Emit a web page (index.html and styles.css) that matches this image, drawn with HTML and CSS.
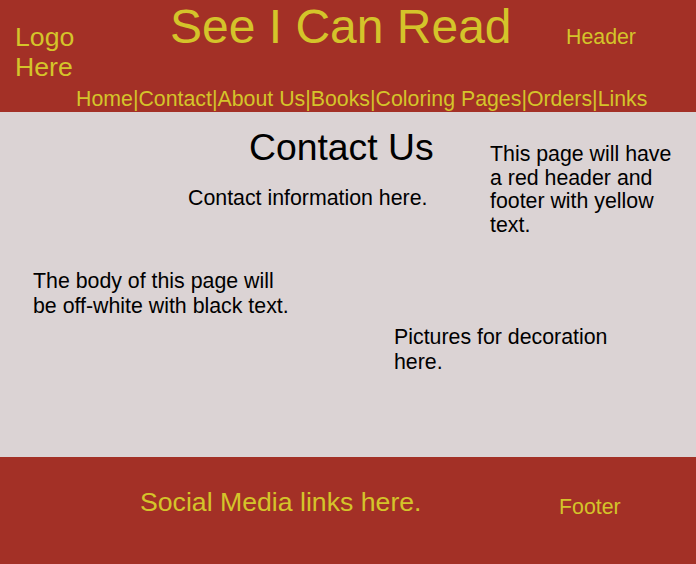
FILE: index.html
```html
<!DOCTYPE html>
<html lang="en">
<head>
<meta charset="UTF-8">
<meta name="viewport" content="width=device-width, initial-scale=1.0">
<title>See I Can Read - Contact Us</title>
<link rel="stylesheet" href="styles.css">
</head>
<body>
    <header id="site-header">
        <div class="logo">Logo<br>Here</div>
        <div class="site-title">See I Can Read</div>
        <div class="region-label">Header</div>
        <nav class="main-nav">Home|Contact|About Us|Books|Coloring Pages|Orders|Links</nav>
    </header>
    <main id="content">
        <div class="intro">
            <div class="contact">
                <h1>Contact Us</h1>
                <p class="contact-info">Contact information here.</p>
            </div>
            <p class="note">This page will have a red header and footer with yellow text.</p>
        </div>
        <p class="body-note">The body of this page will be off-white with black text.</p>
        <p class="pictures">Pictures for decoration here.</p>
    </main>
    <footer id="site-footer">
        <p class="social">Social Media links here.</p>
        <p class="region-label">Footer</p>
    </footer>
</body>
</html>
```

FILE: styles.css
```css
body {
    font-family: "Liberation Sans", Arial, sans-serif;
    font-size: 21.33px;
    margin: 0;
    padding: 0;
    background-color: #dbd3d4;
    color: #000;
}
p {
    margin: 0;
}
#site-header {
    display: grid;
    grid-template-columns: 155px 396px 1fr;
    align-items: start;
    height: 112px;
    box-sizing: border-box;
    padding-left: 15px;
    background-color: #a33026;
    color: #d4c42a;
}
.logo {
    font-size: 26.67px;
    line-height: 30px;
    margin-top: 22px;
}
.site-title {
    font-size: 48px;
    line-height: 48px;
    margin-top: 3px;
}
#site-header .region-label {
    margin-top: 25px;
}
.main-nav {
    grid-column: 1 / -1;
    margin-top: 5px;
    padding-left: 61px;
}
#content {
    height: 345px;
    box-sizing: border-box;
    overflow: hidden;
}
.intro {
    display: grid;
    grid-template-columns: 1fr 206px;
}
.contact h1 {
    font-size: 37.33px;
    font-weight: normal;
    margin: 14px 0 0 249px;
}
.contact-info {
    margin: 17px 0 0 188px;
}
.note {
    margin-top: 31px;
    padding-right: 10px;
    line-height: 23.5px;
}
.body-note {
    margin: 32px 0 0 33px;
    width: 262px;
}
.pictures {
    margin: 6px 0 0 394px;
    width: 230px;
}
#site-footer {
    display: grid;
    grid-template-columns: 140px 419px 1fr;
    align-items: start;
    height: 107px;
    box-sizing: border-box;
    padding-top: 30px;
    background-color: #a33026;
    color: #d4c42a;
}
.social {
    grid-column: 2;
    font-size: 26.67px;
}
#site-footer .region-label {
    grid-column: 3;
    margin-top: 8px;
}
```
